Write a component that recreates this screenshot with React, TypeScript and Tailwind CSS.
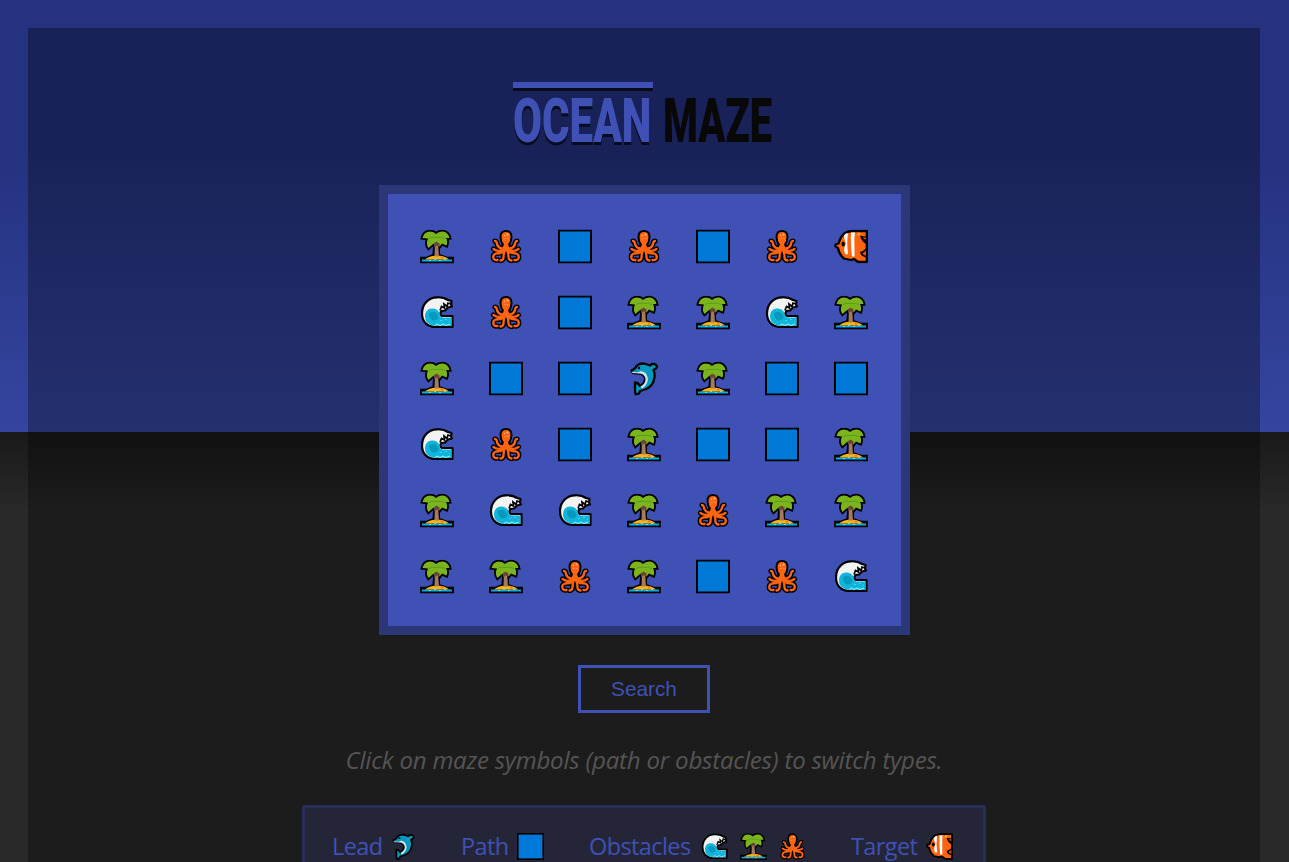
import React from 'react';

type Kind = 'palm' | 'octopus' | 'path' | 'wave' | 'dolphin' | 'fish';

const canopy =
  'M2.5 8.5Q4 2 10 2Q14 2 16 4.5Q19 1.5 23 2Q28.5 3 29.5 8.5L26 8.5Q28 12 26.5 16L22 14L19.5 17L16.5 13L12.5 15L8.5 18.5Q5.500 14.500 8 9Z';

const Palm = () => (
  <>
    <path d="M1.200 28.500H6L13.500 25.500L14.500 14H18.500L19 25.500L27.500 28.500H32.800V32.800H1.200Z" fill="#000" stroke="#000" strokeWidth="2.300" />
    <path d={canopy} fill="#000" stroke="#000" strokeWidth="3.600" />
    <path d="M2 30H32V32H2Z" fill="#00b0e8" />
    <path d="M5 30Q9 26.500 16 26Q25 26 29 30Z" fill="#ffb414" />
    <path d="M15 12h3l1 15h-4.500Z" fill="#a47b5e" />
    <path d={canopy} fill="#7ab51d" />
    <path d="M9 9Q12 7 16 8Q21 7 25 9" fill="none" stroke="#548f1b" strokeWidth=".7" />
    <path d="M13.500 14l3-2 3 2v3l-3-1-2 2Z" fill="#6b4538" />
    <path d="M21 27l2 2m0-2l-2 2" stroke="#ff5818" strokeWidth="1" />
    <path d="M9 31h2m3-1h2m3 1h2m3-1h2" stroke="#6edbf5" strokeWidth="1" />
  </>
);

const limbs =
  'M14 19Q8.500 19 7.500 12.500Q7 11.500 6 11.500M14.500 20Q9 23 4.500 19.500M14.500 22Q12 24 7 24Q3.500 25 4.500 29Q5.500 31 8.500 30.500M15.500 22Q14.500 24 14.500 28Q14.500 30.500 11.500 31M20 19Q25.500 19 26.500 12.500Q27 11.500 28 11.500M19.500 20Q25 23 29.500 19.500M19.500 22Q22 24 27 24Q30.500 25 29.500 29Q28.500 31 25.500 30.500M18.500 22Q19.500 24 19.500 28Q19.500 30.500 22.500 31';

const Octopus = () => (
  <>
    <path d={limbs} fill="none" stroke="#000" strokeWidth="5.200" strokeLinecap="round" />
    <path d="M17 2Q22 2 22 7.500Q22 11 20 14.500L21 20Q17 24 13 20L14 14.500Q12 11 12 7.500Q12 2 17 2Z" fill="#ff6510" stroke="#000" strokeWidth="3" />
    <path d={limbs} fill="none" stroke="#ff6510" strokeWidth="2.300" strokeLinecap="round" />
    <path d="M17 2.500Q21.500 2.500 21.500 7.500Q21.500 11 19.500 14.500L20.500 21Q17 23 13.500 21L14.500 14.500Q12.500 11 12.500 7.500Q12.500 2.500 17 2.500Z" fill="#ff6510" />
    <path d="M14 14v2m6-2v2" stroke="#000" strokeWidth="1.400" />
    <circle cx="18.5" cy="5" r="1.1" fill="#ffb893" />
    <circle cx="15.5" cy="6" r=".7" fill="#ffb893" />
    <circle cx="16" cy="9" r=".6" fill="#ffb893" />
    <circle cx="19" cy="9" r=".6" fill="#ffb893" />
  </>
);

const Wave = () => (
  <>
    <path d="M32.500 31.500H15C6 31 2 25 2 18C2 8 9 2 17 1.800Q24 1.500 28 4.500L31.500 5.500L31 9L32 11L28 12L25 15L21.500 15.500Q19 19 22 20.500H32.500Z" fill="#f3f3f3" stroke="#000" strokeWidth="2.200" strokeLinejoin="round" />
    <path d="M5 21C5 16 8 13 12 13Q18 13 19.500 18Q20 22 23 22H31.500V30.500H16C10 30 5 27 5 21Z" fill="#10b5dc" />
    <path d="M9 18Q11 15.500 14 16Q18 18 18.500 22Q17 25.500 13 25Q9 23 9 18Z" fill="#0799bd" />
    <path d="M20 15l1.500-4 3 1.500-.5-4 3 2.500 1-3.500 3 1" fill="none" stroke="#000" strokeWidth="1.700" />
    <path d="M15 30l2-1.500 3 1.500 3-1.500 3 1.500 4-1.500" fill="none" stroke="#a8edff" strokeWidth="1" />
    <path d="M20 25h2m3-1h2m2 2h1" stroke="#43d3ef" strokeWidth="1" />
  </>
);

const Dolphin = () => (
  <>
    <path d="M4.500 9L8 7Q10 2 17 2L23 4L25 2.500Q29 2 30 5L29 7L26.500 8.500Q29 14 26 21Q23 27 16 28.500L13 29.500L12 32L8.500 33L8 28V21Q11 21 13 24.500Q18 22 18 17Q17 12 12 12L6 11.500Z" fill="#0799bd" stroke="#000" strokeWidth="2.300" strokeLinejoin="round" />
    <path d="M4.500 10Q12 11.500 14 9.500Q23 12 22 19Q20 25 15 27L13.500 25Q19 22 18.500 17Q17 12 12 12L5.500 11.500Z" fill="#cbe6f2" />
    <path d="M19 8Q25 13 23 20Q21 26 14.500 28Q20 24 21 18Q20 12 17 10Z" fill="#0799bd" />
    <circle cx="12" cy="6.5" r="1.200" />
  </>
);

const Fish = () => (
  <>
    <path d="M32.800 1.500H18Q9 2 6 10L4.500 14L1.500 15V17L4 18.500Q5 25 10 29L17 30.500L20 29.500L24 32.500H32.800Z" fill="#ff650f" stroke="#000" strokeWidth="2.300" strokeLinejoin="round" />
    <path d="M26 6Q29 7 33 7V15Q27 12 26 6ZM33 18V28Q26 27 26 22Q28 23 33 18Z" fill="#000" />
    <path d="M28.500 8H32v2Q30 10 28.500 8ZM28.500 24L32 21V26Q29 26 28.500 24Z" fill="#e74b09" />
    <path d="M10 6Q12 3 14 4Q12.500 13 14 24Q13 26 11 24Q9 20 12 14Q10 10 10 6ZM17 3H21Q20 9 20.500 16V27H18Q16.500 16 17 3Z" fill="#fff" />
    <ellipse cx="9.200" cy="14.500" rx="1.700" ry="2.500" />
    <circle cx="25" cy="4.500" r="1.600" fill="#ffac18" />
  </>
);

const drawings: Record<Kind, React.ReactNode> = {
  palm: <Palm />,
  octopus: <Octopus />,
  wave: <Wave />,
  dolphin: <Dolphin />,
  fish: <Fish />,
  path: <rect x="1" y="1" width="32" height="32" fill="#0078d7" stroke="#000" strokeWidth="2" />,
};

const Symbol = ({ kind, small = false }: { kind: Kind; small?: boolean }) => (
  <svg viewBox="0 0 34 34" className={small ? 'size-[27px] shrink-0' : 'mt-[3px] size-[34px] shrink-0 -translate-y-[0.5px]'}>
    {drawings[kind]}
  </svg>
);

const maze: Kind[][] = [
  ['palm', 'octopus', 'path', 'octopus', 'path', 'octopus', 'fish'],
  ['wave', 'octopus', 'path', 'palm', 'palm', 'wave', 'palm'],
  ['palm', 'path', 'path', 'dolphin', 'palm', 'path', 'path'],
  ['wave', 'octopus', 'path', 'palm', 'path', 'path', 'palm'],
  ['palm', 'wave', 'wave', 'palm', 'octopus', 'palm', 'palm'],
  ['palm', 'palm', 'octopus', 'palm', 'path', 'octopus', 'wave'],
];

const legend: { label: string; kinds: Kind[]; box: string; text: string }[] = [
  { label: 'Lead', kinds: ['dolphin'], box: 'w-[129px]', text: 'w-[58px]' },
  { label: 'Path', kinds: ['path'], box: 'w-[128px]', text: 'w-[56px]' },
  { label: 'Obstacles', kinds: ['wave', 'palm', 'octopus'], box: 'w-[262px]', text: 'w-[112px]' },
  { label: 'Target', kinds: ['fish'], box: 'w-[105px]', text: 'w-[75px]' },
];

export default function App() {
  return (
    <div className="h-[862px] overflow-hidden bg-[linear-gradient(to_bottom,#25327f_0px,#25327f_155px,#3545a0_432px,#191919_432px,#292929_512px)] px-7 pt-7">
      <main className="flex h-[900px] w-[1232px] flex-col items-center bg-black/30">
        <h1 className="mt-[54px] flex h-[67px] w-[262px] gap-[10px] font-['Roboto'] text-[62px] leading-[77px] font-black">
          <span className="h-[6px] w-[140px] shrink-0 bg-[#3f51b5] text-[#3f51b5] shadow-[0_3px_0_#080b1c] [text-shadow:0_3px_0_#080b1c]">
            <span className="block w-max origin-left scale-x-[0.678]">OCEAN</span>
          </span>
          <span className="w-[109px] shrink-0 text-[#080808]">
            <span className="block w-max origin-left scale-x-[0.643]">MAZE</span>
          </span>
        </h1>
        <section className="mt-9 w-[531px] shrink-0 border-[9px] border-[#2b3777] bg-[#3f51b5] px-[15px] py-[18px]">
          <div className="grid grid-cols-7">
            {maze.flat().map((kind, i) => (
              <div key={i} className="flex h-[66px] items-center justify-center">
                <Symbol kind={kind} />
              </div>
            ))}
          </div>
        </section>
        <button className="mt-[30px] h-12 w-[132px] shrink-0 border-[3px] border-[#3f51b5] font-['Liberation_Sans'] text-[20.8px] text-[#3f51b5]">
          Search
        </button>
        <p className="mt-[29px] h-9 shrink-0 font-['Open_Sans'] text-[24px] leading-9 tracking-[-0.2px] whitespace-nowrap text-[#555] italic">
          Click on maze symbols (path or obstacles) to switch types.
        </p>
        <footer className="mt-[27px] flex h-24 w-[684px] shrink-0 rounded-[3px] border-[3px] border-[#262e59] bg-[#242638] pt-[25px] pl-[27px] font-['Open_Sans'] text-[23.5px] leading-[27px] tracking-[-0.6px] text-[#3f51b5]">
          {legend.map((item) => (
            <div key={item.label} className={`flex h-7 shrink-0 ${item.box}`}>
              <span className={`shrink-0 ${item.text}`}>{item.label}</span>
              <span className="flex gap-3">
                {item.kinds.map((kind) => (
                  <Symbol key={kind} kind={kind} small />
                ))}
              </span>
            </div>
          ))}
        </footer>
      </main>
    </div>
  );
}
